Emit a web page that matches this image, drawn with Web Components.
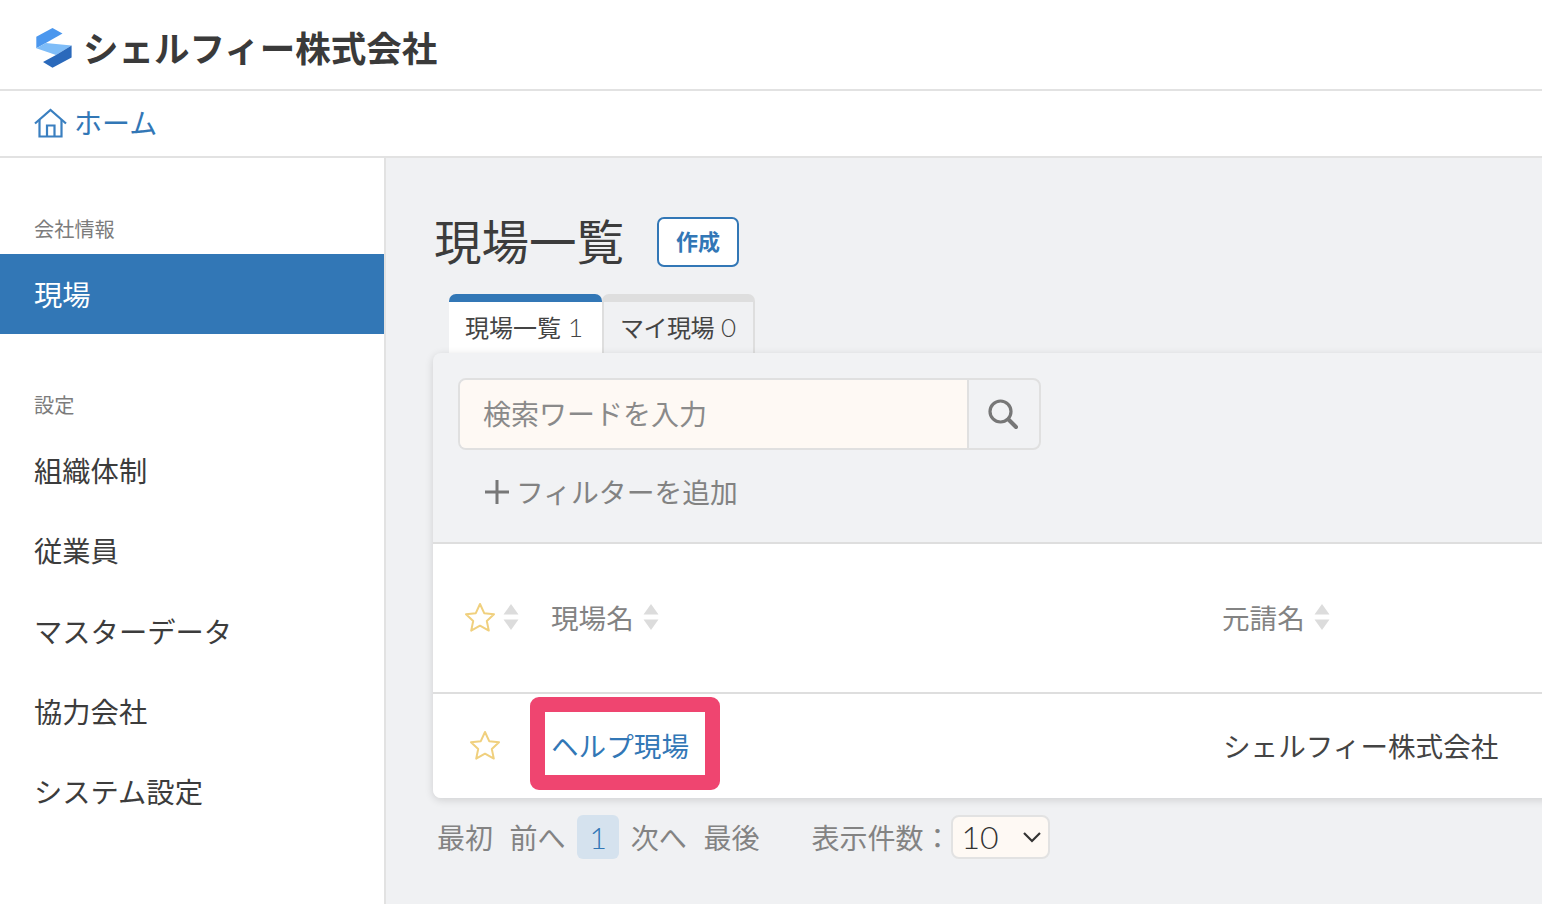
<!DOCTYPE html>
<html lang="ja">
<head>
<meta charset="utf-8">
<title>現場一覧</title>
<style>
  html, body { margin: 0; height: 904px; overflow: hidden; background: #fff; }
  body { font-family: "Noto Sans CJK JP", "Noto Sans", sans-serif; color: #333; }
  .layout { display: flex; height: 746px; }
</style>
</head>
<body>
<app-header>シェルフィー株式会社</app-header>
<app-crumb>ホーム</app-crumb>
<div class="layout">
  <app-sidebar>
    <side-label>会社情報</side-label>
    <side-item active>現場</side-item>
    <side-label second>設定</side-label>
    <side-item>組織体制</side-item>
    <side-item>従業員</side-item>
    <side-item>マスターデータ</side-item>
    <side-item>協力会社</side-item>
    <side-item>システム設定</side-item>
  </app-sidebar>
  <site-list></site-list>
</div>

<script>
class AppHeader extends HTMLElement
{
    constructor()
    {
        super();
        this.attachShadow({ mode: 'open' });
    }

    connectedCallback()
    {
        this.shadowRoot.innerHTML = `
      <style>
        :host {
            display: flex;
            align-items: center;
            box-sizing: border-box;
            height: 91px;
            padding: 4px 0 0 36px;
            gap: 10px;
            border-bottom: 2px solid #e2e2e2;
            font-size: 35.5px;
            font-weight: 700;
            color: #3a3a3a;
        }
        svg { flex: none; margin-top: 2px; }
      </style>
      <svg width="37" height="41" viewBox="36 27 37 41">
        <polygon fill="#4b97ee" points="36.3,36.8 52.5,27.9 62.5,33.6 45.8,43 36.3,48.2"/>
        <polygon fill="#7fbdf8" points="36.3,48.2 45.8,42.9 71.6,45.6 56,55"/>
        <polygon fill="#2a69bb" points="71.6,45.6 71.6,57.5 52.5,67.8 43,62 56,55"/>
      </svg>
      <span><slot></slot></span>
    `;
    }
}

class AppCrumb extends HTMLElement
{
    constructor()
    {
        super();
        this.attachShadow({ mode: 'open' });
    }

    connectedCallback()
    {
        this.shadowRoot.innerHTML = `
      <style>
        :host {
            display: flex;
            align-items: center;
            box-sizing: border-box;
            height: 67px;
            padding: 0 0 2px 34px;
            gap: 7px;
            border-bottom: 2px solid #e2e2e2;
            font-size: 28px;
            color: #3277b6;
        }
        span { margin-bottom: 2px; }
      </style>
      <svg width="33" height="30" viewBox="0 0 33 30" fill="none" stroke="#3a7fc0" stroke-width="2.2">
        <path d="M1 15.5 16.5 2 32 15.5"/>
        <path d="M5.5 12V28.5H27.5V12"/>
        <path d="M13 28.5V17.5H20.5V28.5"/>
      </svg>
      <span><slot></slot></span>
    `;
    }
}

class AppSidebar extends HTMLElement
{
    constructor()
    {
        super();
        this.attachShadow({ mode: 'open' });
    }

    connectedCallback()
    {
        this.shadowRoot.innerHTML = `
      <style>
        :host {
            display: flex;
            flex-direction: column;
            flex: none;
            box-sizing: border-box;
            width: 386px;
            padding-top: 56px;
            border-right: 2px solid #e2e2e2;
            background: #fff;
        }
      </style>
      <slot></slot>
    `;
    }
}

class SideLabel extends HTMLElement
{
    constructor()
    {
        super();
        this.attachShadow({ mode: 'open' });
    }

    connectedCallback()
    {
        this.shadowRoot.innerHTML = `
      <style>
        :host {
            display: block;
            height: 30px;
            line-height: 30px;
            padding-left: 34px;
            margin-bottom: 10px;
            font-size: 20.2px;
            color: #7c7c7c;
        }
        :host([second]) { margin-top: 56px; margin-bottom: 10px; }
      </style>
      <slot></slot>
    `;
    }
}

class SideItem extends HTMLElement
{
    constructor()
    {
        super();
        this.attachShadow({ mode: 'open' });
    }

    connectedCallback()
    {
        this.shadowRoot.innerHTML = `
      <style>
        :host {
            display: block;
            height: 80.25px;
            line-height: 80px;
            padding-left: 34px;
            font-size: 28.3px;
            color: #3c3c3c;
        }
        :host([active]) { height: 80px; background: #3277b6; color: #fff; }
      </style>
      <slot></slot>
    `;
    }
}

class SortArrows extends HTMLElement
{
    constructor()
    {
        super();
        this.attachShadow({ mode: 'open' });
    }

    connectedCallback()
    {
        this.shadowRoot.innerHTML = `
      <style>
        :host { display: inline-flex; }
      </style>
      <svg width="16" height="28" viewBox="0 0 16 28" fill="#dcdcdc">
        <path d="M8 1 15.5 11.5H.5Z"/>
        <path d="M.5 16.5H15.5L8 27Z"/>
      </svg>
    `;
    }
}

class StarIcon extends HTMLElement
{
    constructor()
    {
        super();
        this.attachShadow({ mode: 'open' });
    }

    connectedCallback()
    {
        this.shadowRoot.innerHTML = `
      <style>
        :host { display: inline-flex; }
      </style>
      <svg width="32" height="30" viewBox="0 0 32 30" fill="none" stroke="#f0d07e" stroke-width="2" stroke-linejoin="round">
        <path d="M16 2 20.2 11.2 30 12.3 22.8 19 24.8 28.6 16 23.7 7.2 28.6 9.2 19 2 12.3 11.8 11.2Z"/>
      </svg>
    `;
    }
}

class SearchBox extends HTMLElement
{
    constructor()
    {
        super();
        this.attachShadow({ mode: 'open' });
    }

    connectedCallback()
    {
        this.shadowRoot.innerHTML = `
      <style>
        :host {
            display: flex;
            box-sizing: border-box;
            width: 583px;
            height: 72px;
            border: 2px solid #e0e0e0;
            border-radius: 8px;
            overflow: hidden;
        }
        .input {
            flex: 1;
            display: flex;
            align-items: center;
            padding: 0 0 2px 23px;
            background: #fef9f4;
            border-right: 2px solid #e0e0e0;
            font-size: 28px;
            color: #8a8a8a;
        }
        .btn {
            flex: none;
            width: 70px;
            display: flex;
            align-items: center;
            justify-content: center;
            padding-right: 2px;
            box-sizing: border-box;
        }
      </style>
      <div class="input">検索ワードを入力</div>
      <div class="btn">
        <svg width="32" height="32" viewBox="0 0 32 32" fill="none" stroke="#777" stroke-linecap="round">
          <circle cx="13.5" cy="13.5" r="10.5" stroke-width="3.2"/>
          <path d="M21.5 21.5 29 29" stroke-width="4"/>
        </svg>
      </div>
    `;
    }
}

class PageFooter extends HTMLElement
{
    constructor()
    {
        super();
        this.attachShadow({ mode: 'open' });
    }

    connectedCallback()
    {
        this.shadowRoot.innerHTML = `
      <style>
        :host {
            display: flex;
            align-items: center;
            height: 44px;
            margin: 17px 0 0 4px;
            font-size: 28px;
            color: #838383;
        }
        .pages { display: flex; align-items: center; gap: 16.6px; }
        .pages .cur {
            display: flex;
            align-items: center;
            justify-content: center;
            width: 42px;
            height: 44px;
            margin: 0 -5px 0 -5px;
            border-radius: 6px;
            background: #d5e2ee;
            color: #3277b6;
            font-family: Lato, sans-serif;
            font-weight: 300;
            font-size: 30px;
        }
        .size { margin-left: 52px; }
        .sel {
            display: flex;
            align-items: center;
            justify-content: space-between;
            box-sizing: border-box;
            width: 99px;
            height: 44px;
            margin-left: 0;
            padding: 0 6px 0 8px;
            border: 2px solid #e2e2e2;
            border-radius: 8px;
            background: #fef9f4;
            color: #333;
            font-family: Lato, sans-serif;
            font-weight: 300;
            font-size: 32px;
        }
        .sel span { margin-bottom: 2px; }
      </style>
      <div class="pages">
        <span>最初</span><span>前へ</span><span class="cur">1</span><span>次へ</span><span>最後</span>
      </div>
      <span class="size">表示件数：</span>
      <div class="sel">
        <span>10</span>
        <svg width="20" height="12" viewBox="0 0 20 12" fill="none" stroke="#333" stroke-width="2.2"><path d="M2 2 10 10 18 2"/></svg>
      </div>
    `;
    }
}

class SiteList extends HTMLElement
{
    constructor()
    {
        super();
        this.attachShadow({ mode: 'open' });
    }

    connectedCallback()
    {
        this.shadowRoot.innerHTML = `
      <style>
        :host {
            display: block;
            flex: 1;
            min-width: 0;
            overflow: hidden;
            box-sizing: border-box;
            padding: 59px 0 0 47px;
            background: #f0f1f3;
        }
        .title { display: flex; align-items: center; height: 50px; margin-left: 1px; gap: 33px; }
        h1 { margin: 0 0 6px; font-size: 47.5px; font-weight: 400; color: #3c3c3c; }
        .create {
            display: flex;
            align-items: center;
            justify-content: center;
            box-sizing: border-box;
            width: 82px;
            height: 50px;
            padding-bottom: 5px;
            border: 2px solid #3277b6;
            border-radius: 7px;
            background: #fff;
            color: #3277b6;
            font-size: 22px;
            font-weight: 700;
        }
        .tabs { display: flex; height: 59px; margin: 27px 0 0 16px; }
        .tab {
            box-sizing: border-box;
            width: 153px;
            height: 59px;
            padding: 6px 0 0 16px;
            border: 2px solid #dedede;
            border-top: 8px solid #dedede;
            border-bottom: 0;
            border-radius: 7px 7px 0 0;
            font-size: 24px;
            line-height: 38px;
            color: #444;
            white-space: nowrap;
        }
        .tab.on { background: #fff; border-top-color: #3277b6; border-right: 0; border-left: 0; }
        .tab + .tab { letter-spacing: -.5px; }
        .tab b { font-family: Lato, sans-serif; font-weight: 300; font-size: 26px; margin-left: 7px; letter-spacing: 0; }
        .card {
            position: relative;
            width: 1300px;
            border-radius: 8px;
            background: #f1f2f4;
            box-shadow: 0 2px 8px rgba(0,0,0,.14);
        }
        .filter { box-sizing: border-box; height: 189px; padding: 25px 0 0 25px; }
        .add {
            display: flex;
            align-items: center;
            gap: 6px;
            height: 44px;
            margin: 20px 0 0 26px;
            font-size: 27.8px;
            color: #828282;
        }
        .add span { margin-bottom: 2px; }
        .table { border-top: 2px solid #dedede; background: #fff; border-radius: 0 0 8px 8px; }
        .row { display: grid; grid-template-columns: 118px 671px 1fr; align-items: center; box-sizing: border-box; }
        .row.head { height: 150px; padding-bottom: 2px; border-bottom: 2px solid #dedede; font-size: 27.6px; color: #838383; }
        .row.body { height: 104px; padding-bottom: 2px; font-size: 27.6px; color: #444; }
        .cell { display: flex; align-items: center; }
        .cell.star { padding-left: 31px; gap: 7px; }
        .cell.name { gap: 9px; }
        .body .cell.star { padding-left: 36px; }
        .body .client { padding-left: 1px; margin-top: -1px; }
        .link { color: #3277b6; position: relative; }
        .mark {
            position: absolute;
            left: -21px;
            top: -28px;
            width: 190px;
            height: 93px;
            box-sizing: border-box;
            border: 15px solid #ef4570;
            border-radius: 9px;
        }
      </style>
      <div class="title">
        <h1>現場一覧</h1>
        <div class="create">作成</div>
      </div>
      <div class="tabs">
        <div class="tab on">現場一覧<b>1</b></div>
        <div class="tab">マイ現場<b>0</b></div>
      </div>
      <div class="card">
        <div class="filter">
          <search-box></search-box>
          <div class="add">
            <svg width="26" height="26" viewBox="0 0 26 26" stroke="#777" stroke-width="3"><path d="M13 1V25M1 13H25"/></svg>
            <span>フィルターを追加</span>
          </div>
        </div>
        <div class="table">
          <div class="row head">
            <div class="cell star"><star-icon></star-icon><sort-arrows></sort-arrows></div>
            <div class="cell name"><span>現場名</span><sort-arrows></sort-arrows></div>
            <div class="cell name"><span>元請名</span><sort-arrows></sort-arrows></div>
          </div>
          <div class="row body">
            <div class="cell star"><star-icon></star-icon></div>
            <div class="cell"><span class="link">ヘルプ現場<span class="mark"></span></span></div>
            <div class="cell client">シェルフィー株式会社</div>
          </div>
        </div>
      </div>
      <page-footer></page-footer>
    `;
    }
}

window.customElements.define("app-header", AppHeader);
window.customElements.define("app-crumb", AppCrumb);
window.customElements.define("app-sidebar", AppSidebar);
window.customElements.define("side-label", SideLabel);
window.customElements.define("side-item", SideItem);
window.customElements.define("sort-arrows", SortArrows);
window.customElements.define("star-icon", StarIcon);
window.customElements.define("search-box", SearchBox);
window.customElements.define("page-footer", PageFooter);
window.customElements.define("site-list", SiteList);
</script>
</body>
</html>
